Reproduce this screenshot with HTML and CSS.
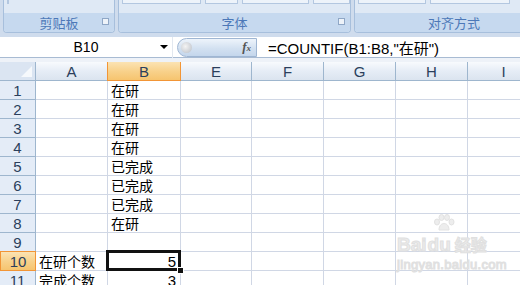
FILE: index.html
```html
<!DOCTYPE html>
<html lang="zh-CN">
<head>
<meta charset="UTF-8">
<title>COUNTIF</title>
<link rel="stylesheet" href="styles.css">
</head>
<body>

<div class="ribbon">
  <div class="group g-clip">
    <div class="btns"><span class="btn" style="width:0"></span></div>
    <div class="label">剪贴板<span class="launcher"></span></div>
  </div>
  <div class="group g-font">
    <div class="btns">
      <span class="btn w80"></span><span class="btn w33"></span><span class="btn w66"></span><span class="btn w36"></span>
    </div>
    <div class="label">字体<span class="launcher"></span></div>
  </div>
  <div class="group g-align">
    <div class="btns">
      <span class="btn w66"></span><span class="btn w80"></span>
    </div>
    <div class="label">对齐方式</div>
  </div>
</div>

<div class="formula-bar">
  <div class="name-box">
    <span class="name">B10</span>
    <span class="drop"></span>
  </div>
  <div class="fx-pill">
    <span class="knob"></span>
    <span class="fx">f<sub>x</sub></span>
  </div>
  <div class="formula">=COUNTIF(B1:B8,"在研")</div>
</div>
<div class="band"></div>

<div class="sheet">
  <div class="row head">
    <div class="c hdr corner"></div>
    <div class="c a">A</div><div class="c b sel-col">B</div><div class="c e">E</div>
    <div class="c f">F</div><div class="c g">G</div><div class="c h">H</div><div class="c i">I</div>
  </div>
  <div class="row"><div class="c hdr">1</div><div class="c a"></div><div class="c b">在研</div><div class="c e"></div><div class="c f"></div><div class="c g"></div><div class="c h"></div><div class="c i"></div></div>
  <div class="row"><div class="c hdr">2</div><div class="c a"></div><div class="c b">在研</div><div class="c e"></div><div class="c f"></div><div class="c g"></div><div class="c h"></div><div class="c i"></div></div>
  <div class="row"><div class="c hdr">3</div><div class="c a"></div><div class="c b">在研</div><div class="c e"></div><div class="c f"></div><div class="c g"></div><div class="c h"></div><div class="c i"></div></div>
  <div class="row"><div class="c hdr">4</div><div class="c a"></div><div class="c b">在研</div><div class="c e"></div><div class="c f"></div><div class="c g"></div><div class="c h"></div><div class="c i"></div></div>
  <div class="row"><div class="c hdr">5</div><div class="c a"></div><div class="c b">已完成</div><div class="c e"></div><div class="c f"></div><div class="c g"></div><div class="c h"></div><div class="c i"></div></div>
  <div class="row"><div class="c hdr">6</div><div class="c a"></div><div class="c b">已完成</div><div class="c e"></div><div class="c f"></div><div class="c g"></div><div class="c h"></div><div class="c i"></div></div>
  <div class="row"><div class="c hdr">7</div><div class="c a"></div><div class="c b">已完成</div><div class="c e"></div><div class="c f"></div><div class="c g"></div><div class="c h"></div><div class="c i"></div></div>
  <div class="row"><div class="c hdr">8</div><div class="c a"></div><div class="c b">在研</div><div class="c e"></div><div class="c f"></div><div class="c g"></div><div class="c h"></div><div class="c i"></div></div>
  <div class="row"><div class="c hdr">9</div><div class="c a"></div><div class="c b"></div><div class="c e"></div><div class="c f"></div><div class="c g"></div><div class="c h"></div><div class="c i"></div></div>
  <div class="row"><div class="c hdr sel-row">10</div><div class="c a">在研个数</div><div class="c b num active">5</div><div class="c e"></div><div class="c f"></div><div class="c g"></div><div class="c h"></div><div class="c i"></div></div>
  <div class="row"><div class="c hdr">11</div><div class="c a">完成个数</div><div class="c b num">3</div><div class="c e"></div><div class="c f"></div><div class="c g"></div><div class="c h"></div><div class="c i"></div></div>

  <!-- baidu jingyan watermark -->
  <div class="watermark">
    <svg class="paw" width="22" height="18" viewBox="0 0 22 18">
      <g fill="#ededed" stroke="#e2e2e2" stroke-width="1">
        <ellipse cx="4" cy="8" rx="2.5" ry="3"/>
        <ellipse cx="8.5" cy="3.5" rx="2.5" ry="3"/>
        <ellipse cx="14" cy="3.5" rx="2.5" ry="3"/>
        <ellipse cx="18.5" cy="8" rx="2.5" ry="3"/>
        <path d="M6 16 C6 11 9 9.5 11 9.5 C13 9.5 16 11 16 16 Z"/>
      </g>
    </svg>
    <div class="wm-logo">Bai<span class="du">du</span><span class="wm-cn">经验</span></div>
    <div class="wm-url">jingyan.baidu.com</div>
  </div>
</div>

</body>
</html>
```

FILE: styles.css
```css
body {
  margin: 0;
  width: 520px;
  height: 285px;
  overflow: hidden;
  background: #fff;
  font-family: "Liberation Sans", "Noto Sans CJK SC", sans-serif;
}

/* ribbon */
.ribbon {
  height: 37px;
  display: flex;
  gap: 3px;
  padding-left: 3px;
  background: #cfdced;
  overflow: hidden;
}

.group {
  height: 33px;
  box-sizing: border-box;
  border: 1px solid #a7bfdc;
  border-top: none;
  border-radius: 0 0 4px 4px;
  background: #dfe9f5;
  display: flex;
  flex-direction: column;
  flex: none;
}

.g-clip { width: 112px; }
.g-font { width: 233px; }
.g-align { width: 200px; }

.btns {
  height: 13px;
  display: flex;
  gap: 4px;
  padding-left: 3px;
}

.btn {
  height: 3px;
  border: 1px solid #b3c7e0;
  border-top: none;
  background: #edf3fa;
}
.w80 { width: 78px; }
.w33 { width: 32px; }
.w66 { width: 66px; }
.w36 { width: 36px; }

.label {
  flex: 1;
  background: #c6d9ef;
  border-radius: 0 0 3px 3px;
  color: #4c78b8;
  font-family: "Noto Sans CJK SC", sans-serif;
  font-size: 13px;
  line-height: 19px;
  text-align: center;
  position: relative;
}

.launcher {
  position: absolute;
  right: 5px;
  top: 5px;
  width: 5px;
  height: 5px;
  border: 1px solid #8fa7c6;
  background: #eef3f9;
}

/* formula bar */
.formula-bar {
  height: 21px;
  display: flex;
  align-items: center;
  background: #fff;
  border-bottom: 1px solid #a8bbd3;
  box-sizing: border-box;
}

.name-box {
  width: 173px;
  height: 21px;
  display: flex;
  align-items: center;
  flex: none;
  border-right: 1px solid #e2e8f0;
  box-sizing: border-box;
}

.name {
  flex: 1;
  text-align: center;
  font-size: 14px;
  padding-left: 12px;
}

.drop {
  width: 0;
  height: 0;
  border-left: 4px solid transparent;
  border-right: 4px solid transparent;
  border-top: 4px solid #000;
  margin-right: 4px;
}

.fx-pill {
  width: 80px;
  height: 19px;
  margin-left: 4px;
  flex: none;
  box-sizing: border-box;
  border: 1px solid #9fb6d3;
  border-radius: 10px 0 0 10px;
  background: linear-gradient(#eef4fb, #d3e1f1 55%, #c4d6ec);
  display: flex;
  align-items: center;
  justify-content: space-between;
  padding: 0 5px 0 3px;
}

.knob {
  width: 11px;
  height: 11px;
  border-radius: 50%;
  background: radial-gradient(circle at 40% 40%, #f4f4f4, #b9bec6);
}

.fx {
  font-family: "Liberation Serif", serif;
  font-style: italic;
  font-weight: bold;
  font-size: 13px;
  color: #555;
}
.fx sub {
  font-size: 9px;
  vertical-align: baseline;
}

.formula {
  padding-left: 11px;
  font-size: 15px;
  color: #000;
  white-space: nowrap;
}

.band {
  height: 4px;
  background: #eef2f8;
}

/* sheet */
.sheet {
  position: relative;
}

.row {
  display: flex;
  height: 19px;
}

.c {
  flex: none;
  box-sizing: border-box;
  border-right: 1px solid #d0d7e5;
  border-bottom: 1px solid #d0d7e5;
  font-family: "Noto Sans CJK SC", sans-serif;
  font-size: 14px;
  line-height: 19px;
  padding-left: 3px;
  white-space: nowrap;
  overflow: hidden;
}

.a { width: 72px; }
.b { width: 73px; }
.e { width: 71px; }
.f, .g, .h, .i { width: 72px; }

.hdr {
  width: 36px;
  padding: 0;
  text-align: center;
  background: #e4ecf7;
  border-right-color: #9eb6ce;
  border-bottom-color: #9eb6ce;
  color: #2b3f5c;
  font-family: "Liberation Sans", sans-serif;
  font-size: 15px;
  line-height: 20px;
}

.head .c {
  padding: 0;
  text-align: center;
  background: linear-gradient(#f8fafd, #e6edf6 50%, #dbe4ef);
  border-right-color: #9eb6ce;
  border-bottom-color: #9eb6ce;
  color: #2b3f5c;
  font-family: "Liberation Sans", sans-serif;
  font-size: 15px;
  line-height: 20px;
}

.head .corner {
  position: relative;
  background: #dbe5f2;
}
.corner::after {
  content: "";
  position: absolute;
  right: 3px;
  bottom: 3px;
  border-left: 11px solid transparent;
  border-bottom: 11px solid #fff;
  opacity: 0.75;
}

.head .sel-col,
.sel-row {
  background: linear-gradient(#fbe3b4, #f8d28c 50%, #f6c46f);
  border-color: #f29536;
  border-left: 1px solid #f29536;
}
.head .sel-col {
  margin-left: -1px;
  width: 74px;
}
.sel-row {
  border-top: 1px solid #f29536;
  margin-top: -1px;
  height: 20px;
}

.num {
  text-align: right;
  padding-right: 4px;
  font-family: "Liberation Sans", sans-serif;
  font-size: 15px;
}

.active {
  position: relative;
  overflow: visible;
}
.active::before {
  content: "";
  position: absolute;
  left: -2px;
  top: -2px;
  right: -1px;
  bottom: -1px;
  border: 3px solid #111;
}
.active::after {
  content: "";
  position: absolute;
  right: -4px;
  bottom: -4px;
  width: 5px;
  height: 5px;
  background: #111;
  border: 1px solid #fff;
}

/* watermark */
.watermark {
  position: absolute;
  left: 397px;
  top: 152px;
  color: #ebebeb;
  -webkit-text-stroke: 1px #e0e0e0;
}
.paw {
  display: block;
  margin-left: 36px;
}
.wm-logo {
  font-family: "Liberation Sans", sans-serif;
  font-weight: bold;
  font-size: 19px;
  line-height: 24px;
  white-space: nowrap;
}
.du {
  margin-left: 1px;
}
.wm-cn {
  font-family: "Noto Sans CJK SC", sans-serif;
  font-size: 16px;
  margin-left: 4px;
}
.wm-url {
  font-size: 13px;
  line-height: 16px;
  letter-spacing: 0.3px;
}
```
